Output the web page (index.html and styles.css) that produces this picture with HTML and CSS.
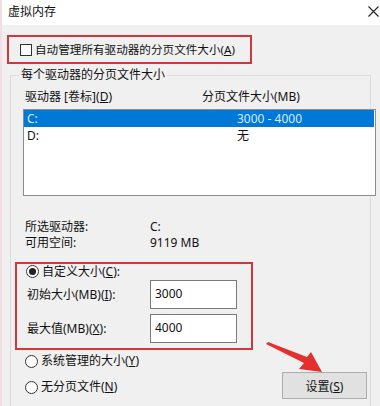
FILE: index.html
```html
<!DOCTYPE html>
<html lang="zh">
<head>
    <meta charset="UTF-8">
    <title>虚拟内存</title>
    <link rel="stylesheet" href="styles.css">
</head>
<body>
    <div class="window">
        <div class="titlebar">
            <span class="title">虚拟内存</span>
            <svg class="close" width="11" height="11" viewBox="0 0 11 11">
                <path d="M0.5 0.5 L10.5 10.5 M10.5 0.5 L0.5 10.5" stroke="#222" stroke-width="1.1"/>
            </svg>
        </div>

        <div class="mark auto-manage">
            <span class="checkbox"></span>
            <span class="auto-text">自动管理所有驱动器的分页文件大小(<u>A</u>)</span>
        </div>

        <fieldset class="group">
            <legend>每个驱动器的分页文件大小</legend>
            <div class="cols">
                <span>驱动器 [卷标](<u>D</u>)</span>
                <span>分页文件大小(MB)</span>
            </div>
            <div class="listbox">
                <div class="row selected"><span>C:</span><span>3000 - 4000</span></div>
                <div class="row"><span>D:</span><span>无</span></div>
            </div>

            <div class="info">
                <span>所选驱动器:</span><span>C:</span>
                <span>可用空间:</span><span>9119 MB</span>
            </div>

            <div class="mark custom">
                <div class="radio-row first">
                    <span class="radio checked"></span>
                    <span>自定义大小(<u>C</u>):</span>
                </div>
                <div class="field">
                    <span class="field-label">初始大小(MB)(<u>I</u>):</span>
                    <input class="text-input" type="text" value="3000">
                </div>
                <div class="field second">
                    <span class="field-label">最大值(MB)(<u>X</u>):</span>
                    <input class="text-input" type="text" value="4000">
                </div>
            </div>

            <div class="bottom">
                <div class="radios">
                    <div class="radio-row">
                        <span class="radio"></span>
                        <span>系统管理的大小(<u>Y</u>)</span>
                    </div>
                    <div class="radio-row">
                        <span class="radio"></span>
                        <span>无分页文件(<u>N</u>)</span>
                    </div>
                </div>
                <button class="btn">设置(<u>S</u>)</button>
            </div>
        </fieldset>

        <!-- 标注箭头 -->
        <svg class="arrow" width="380" height="406" viewBox="0 0 380 406">
            <polygon points="264,344 266,342 305,357 309,352 320,372 297,369 302,363" fill="#e3302f"/>
        </svg>
    </div>
</body>
</html>
```

FILE: styles.css
```css
:root {
    --bg: #f0f0f0;
    --text: #111;
    --mark: #d0363c;
    --select: #0078d7;
}

* {
    box-sizing: border-box;
}

body {
    margin: 0;
    background: var(--bg);
    font-family: "Noto Sans", "Noto Sans CJK SC", sans-serif;
    font-size: 12px;
    color: var(--text);
}

u {
    text-decoration: underline;
    text-underline-offset: 1px;
}

.window {
    position: relative;
    width: 380px;
    height: 406px;
    overflow: hidden;
    background: var(--bg);
    border-left: 2px solid #f3dde3;
}

.titlebar {
    height: 25px;
    background: #fff;
    display: flex;
    align-items: center;
    justify-content: space-between;
    padding: 0 1px 2px 6px;
}

.title {
    line-height: 16px;
}

/* 红色标注框 */
.mark {
    border: 2px solid var(--mark);
}

.auto-manage {
    margin: 10px 0 0 5px;
    width: 245px;
    height: 29px;
    display: flex;
    align-items: center;
    gap: 3px;
    padding-left: 11px;
    line-height: 16px;
}

.auto-text {
    font-size: 11.6px;
    white-space: nowrap;
}

.checkbox {
    flex-shrink: 0;
    width: 12px;
    height: 12px;
    border: 1px solid #333;
    background: #fff;
}

.group {
    margin: 3px 0 0 8px;
    width: 361px;
    height: 400px;
    padding: 0;
    border: 1px solid #dcdcdc;
    min-width: 0;
}

.group legend {
    margin-left: 8px;
    padding: 0 2px;
    line-height: 16px;
}

.cols {
    display: grid;
    grid-template-columns: 177px auto;
    margin-top: 6px;
    padding-left: 14px;
    line-height: 16px;
}

.listbox {
    margin: 4px 0 0 12px;
    width: 353px;
    height: 87px;
    background: #fff;
    border: 1px solid #8a8d93;
}

.row {
    display: grid;
    grid-template-columns: 210px auto;
    height: 17px;
    line-height: 17px;
    padding-left: 3px;
    margin-right: 1px;
}

.row.selected {
    background: var(--select);
    color: #d8ecff;
}

.info {
    display: grid;
    grid-template-columns: 125px auto;
    margin-top: 23px;
    padding-left: 14px;
    line-height: 16px;
}

.custom {
    margin: 11px 0 0 4px;
    width: 238px;
    padding: 0 0 5px 10px;
}

.radio-row {
    display: flex;
    align-items: center;
    gap: 3px;
    height: 16px;
    line-height: 16px;
}

.radio-row.first {
    margin-left: -1px;
    height: 15px;
}

.radio {
    flex-shrink: 0;
    width: 13px;
    height: 13px;
    border: 1px solid #333;
    border-radius: 50%;
    background: #fff;
    display: flex;
    align-items: center;
    justify-content: center;
}

.radio.checked::after {
    content: '';
    width: 7px;
    height: 7px;
    border-radius: 50%;
    background: #222;
}

.field {
    display: flex;
    align-items: center;
    margin-top: 1px;
    height: 29px;
}

.field.second {
    margin-top: 5px;
}

.field-label {
    width: 123px;
    line-height: 16px;
}

.text-input {
    width: 87px;
    height: 29px;
    border: 1px solid #7a7a7a;
    background: #fff;
    font: inherit;
    color: var(--text);
    padding: 0 0 3px 4px;
    outline: none;
}

.bottom {
    display: flex;
    align-items: flex-start;
    margin-top: 3px;
    padding-left: 14px;
}

.radios {
    display: flex;
    flex-direction: column;
    gap: 10px;
}

.btn {
    margin: 19px 3px 0 auto;
    width: 85px;
    height: 27px;
    background: #e1e1e1;
    border: 1px solid #adadad;
    font: inherit;
    color: var(--text);
    padding: 0;
}

.arrow {
    position: absolute;
    left: 0;
    top: 0;
    pointer-events: none;
}
```
